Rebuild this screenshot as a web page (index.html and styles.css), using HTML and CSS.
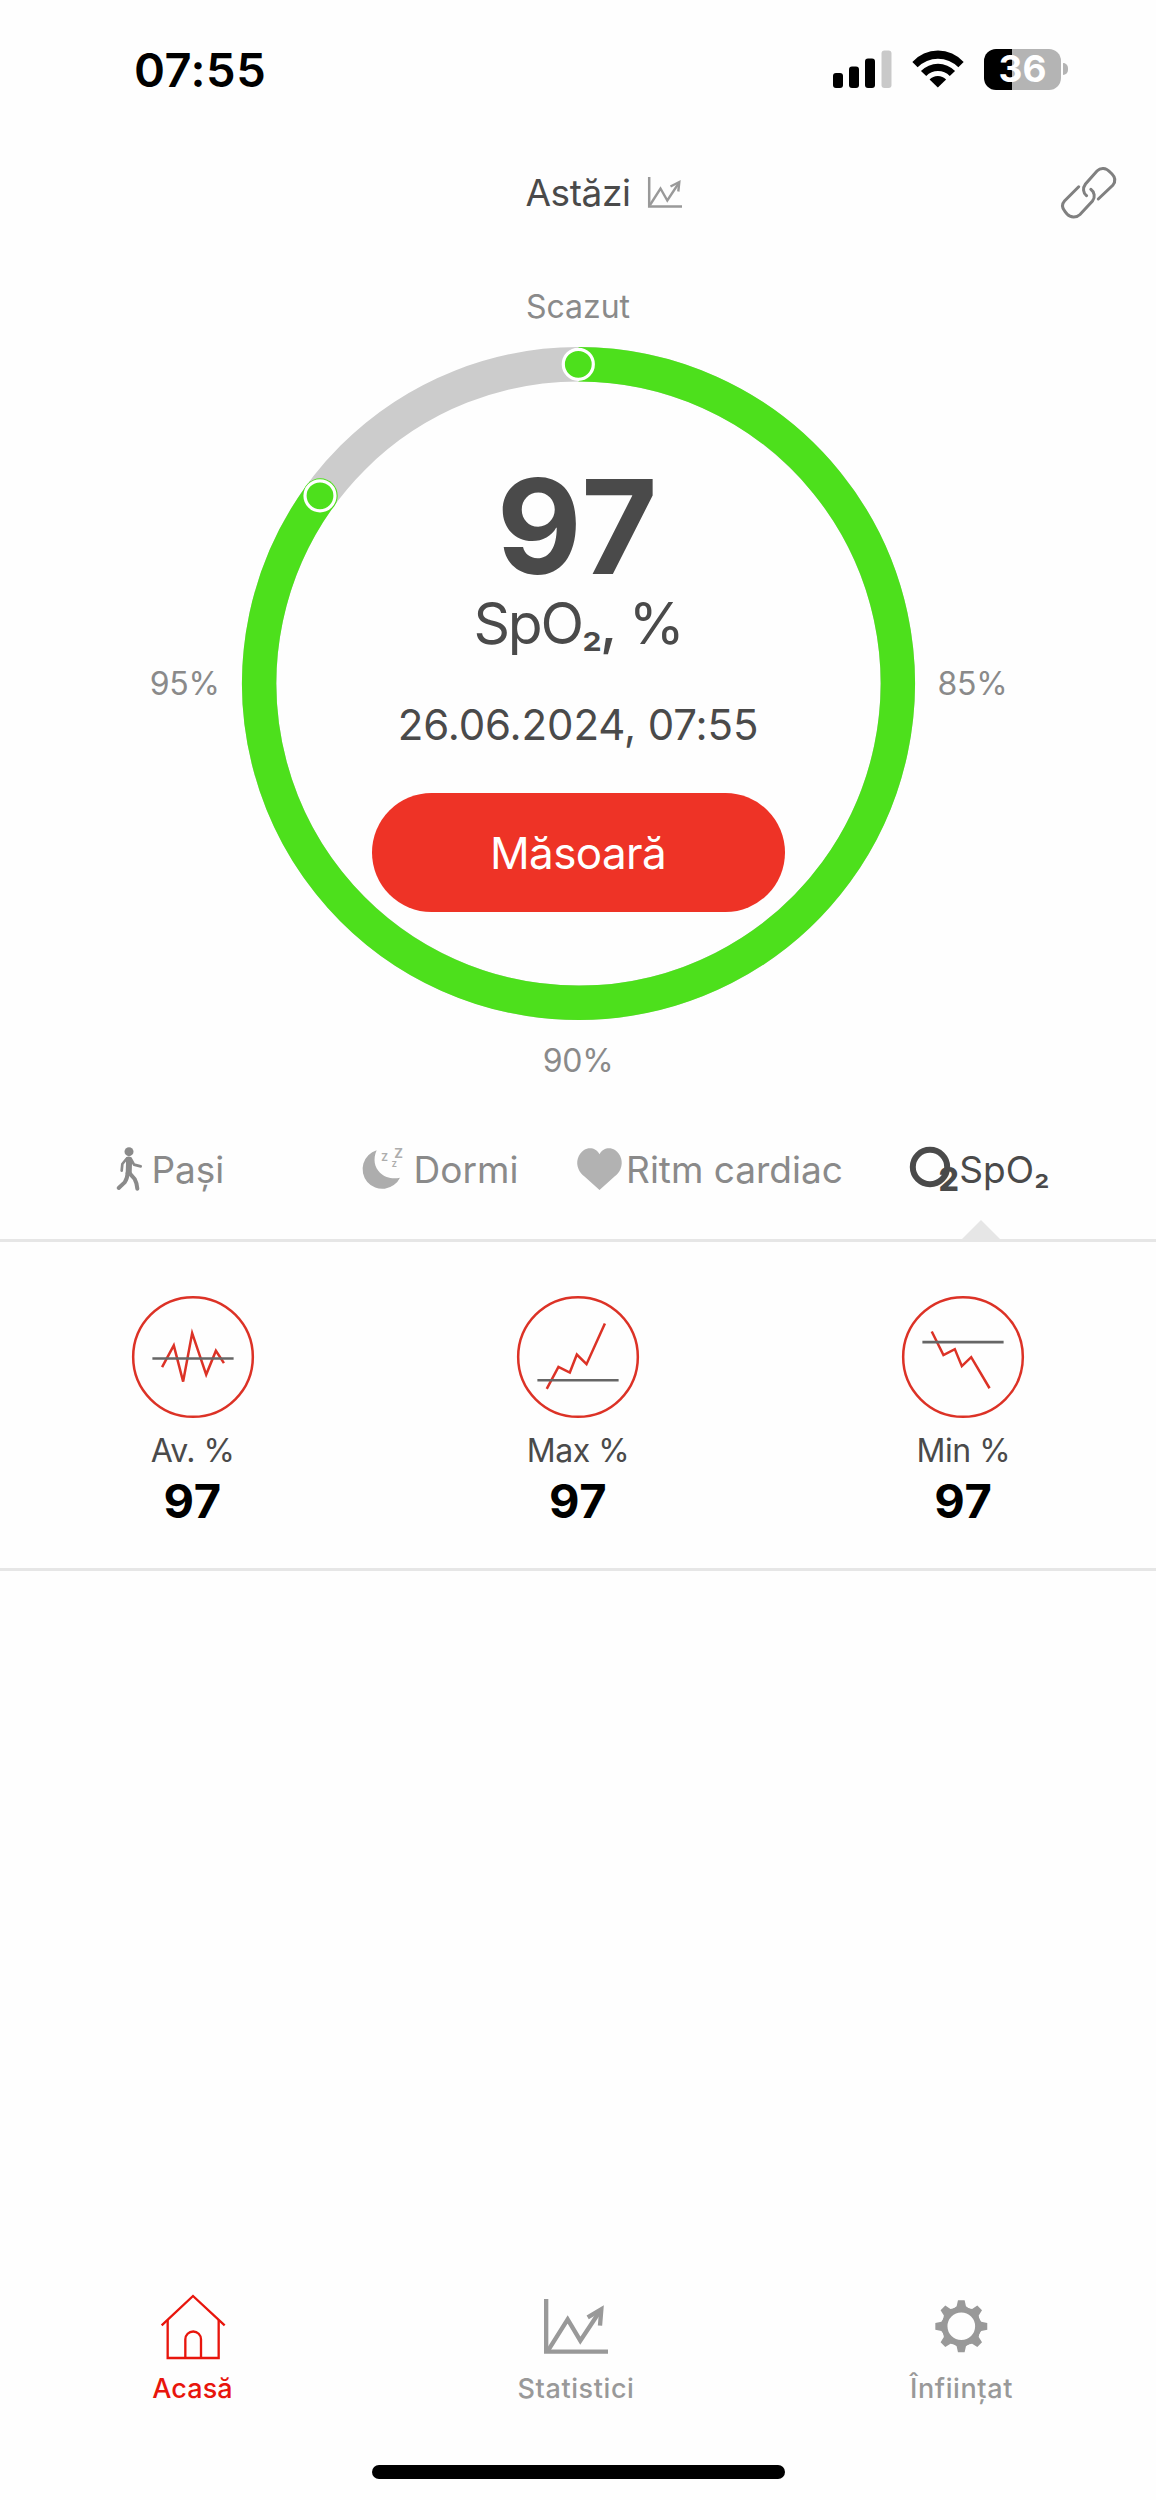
FILE: index.html
```html
<!DOCTYPE html>
<html lang="ro">
<head>
    <meta charset="UTF-8">
    <meta name="viewport" content="width=device-width, initial-scale=1.0">
    <title>SpO₂</title>
    <link rel="stylesheet" href="styles.css">
</head>
<body>
    <div class="status-bar">
        <span class="clock">07:55</span>
        <div class="status-icons">
            <svg class="signal" viewBox="0 0 59 38">
                <rect x="0" y="23" width="10" height="15" rx="3"/>
                <rect x="16" y="16.5" width="10" height="21.5" rx="3"/>
                <rect x="32" y="8.5" width="10" height="29.5" rx="3"/>
                <rect x="48.5" y="0.5" width="10" height="37.5" rx="3" fill="#c9c9c9"/>
            </svg>
            <svg class="wifi" viewBox="335 56 157 114">
                <path d="M336 92 A104 104 0 0 1 491 92 L475 108 A86 86 0 0 0 352 108 Z"/>
                <path d="M362 119 A72 72 0 0 1 465 119 L449 134 A50 50 0 0 0 378 134 Z"/>
                <path d="M388 145 A34 34 0 0 1 438 145 L413 169 Z"/>
            </svg>
            <div class="battery"><span>36</span></div>
            <div class="battery-tip"></div>
        </div>
    </div>

    <div class="header">
        <h1 class="title">Astăzi</h1>
        <div class="header-icons">
            <svg class="small-chart" viewBox="0 0 34 31">
                <path d="M1.2 0 V29.5 H34" stroke-width="2.5"/>
                <path d="M2 28 L12.5 11.5 L19.3 23.5 L30.5 6.5" stroke-width="2.4"/>
                <path d="M22.5 9.5 L31.3 5 L30.3 14.5" stroke-width="2.4"/>
            </svg>
            <svg class="link-icon" viewBox="0 0 55 52">
                <path d="M25.6 28.7 C22 26 21.5 21 24.5 17 L36 4 C39.5 .3 45 .5 49 5 L51 7 C54.5 10.5 54.5 14.5 52 18 L37.3 32"/>
                <path d="M29.8 22.3 C33.5 25 34.5 30 31.5 34 L19 47.5 C15.5 51 9.5 51 6 47 L4 44.5 C1 41 .8 37 3.5 34 L17.7 19.8"/>
            </svg>
        </div>
    </div>

    <div class="gauge">
        <div class="gauge-label gauge-top">Scazut</div>
        <div class="gauge-row">
            <div class="gauge-label gauge-left">95%</div>
            <div class="ring">
                <svg class="ring-svg" viewBox="0 0 673 673">
                    <circle cx="336.5" cy="336.5" r="319.3" fill="none" stroke="#cccccc" stroke-width="34.4"/>
                    <path d="M336.5 17.2 A319.3 319.3 0 1 1 78.2 148.8" fill="none" stroke="#4de01c" stroke-width="34.4"/>
                    <circle cx="78.2" cy="148.8" r="17.5" fill="#4de01c"/>
                    <circle cx="336.3" cy="17.3" r="15" fill="#4de01c" stroke="#fff" stroke-width="3.2"/>
                    <circle cx="78" cy="148.8" r="15" fill="#4de01c" stroke="#fff" stroke-width="3.2"/>
                </svg>
                <div class="reading">
                    <div class="reading-value">97</div>
                    <div class="reading-unit">SpO<span class="sub">₂</span><span class="comma">,</span> %</div>
                    <div class="reading-date">26.06.2024, 07:55</div>
                    <button class="measure-btn">Măsoară</button>
                </div>
            </div>
            <div class="gauge-label">85%</div>
        </div>
        <div class="gauge-label gauge-bottom">90%</div>
    </div>

    <div class="tabs">
        <div class="tab tab-steps">
            <svg class="walk-icon" viewBox="112 81 80 132">
                <circle cx="151" cy="95" r="13.5"/>
                <path class="body" d="M142 112 Q150 107 158 112 Q161 120 160 130 L159 162 H141 L142 130 Z"/>
                <path class="limb" d="M143 117 L131 132 L129 152"/>
                <path class="limb" d="M157 117 L166 134 L186 139"/>
                <path class="leg" d="M147 158 Q146 176 138 187 L120 204"/>
                <path class="leg" d="M153 160 L168 177 Q174 188 176 206"/>
            </svg>
            <span>Pași</span>
        </div>
        <div class="tab tab-sleep">
            <svg class="moon-icon" viewBox="848 81 126 125">
                <path d="M892 88 A59 59 0 1 0 962 170 C940 174 918 171 902 155 C886 140 880 115 892 88 Z"/>
                <text x="906" y="119" font-size="30">Z</text>
                <text x="937" y="138" font-size="23">Z</text>
                <text x="945" y="111" font-size="39">Z</text>
            </svg>
            <span>Dormi</span>
        </div>
        <div class="tab tab-heart">
            <svg class="heart-icon" viewBox="0 0 45 42">
                <path d="M22.5 6.2 C26 -0.3 33 -1 38 2 C44 6 46.5 14 43.5 21 C42.3 24 40 26.5 37.5 28.5 L22.5 42 L7.5 28.5 C5 26.5 2.7 24 1.5 21 C-1.5 14 1 6 7 2 C12 -1 19 -0.3 22.5 6.2 Z"/>
            </svg>
            <span>Ritm cardiac</span>
        </div>
        <div class="tab tab-spo2 active">
            <svg class="o2-icon" viewBox="0 0 49 44">
                <circle cx="20" cy="20" r="17.2"/>
                <text x="28.5" y="43.5">2</text>
            </svg>
            <span>SpO<span class="sub">₂</span></span>
            <i class="arrow"></i>
        </div>
    </div>

    <div class="stats">
        <div class="stat">
            <svg class="stat-icon" viewBox="97 47 365 365">
                <circle cx="279.5" cy="229.5" r="179"/>
                <polyline points="187,260 222,195 250,303 277,158 319,282 348,211 372,248"/>
                <line x1="158" y1="234" x2="401" y2="234"/>
            </svg>
            <div class="stat-label">Av. %</div>
            <div class="stat-value">97</div>
        </div>
        <div class="stat">
            <svg class="stat-icon" viewBox="97 47 365 365">
                <circle cx="279.5" cy="229.5" r="179"/>
                <polyline points="186,325 221,259 255,276 276,222 305,251 360,129"/>
                <line x1="158" y1="299" x2="401" y2="299"/>
            </svg>
            <div class="stat-label">Max %</div>
            <div class="stat-value">97</div>
        </div>
        <div class="stat">
            <svg class="stat-icon" viewBox="97 47 365 365">
                <circle cx="279.5" cy="229.5" r="179"/>
                <polyline points="186,153 221,224 255,206 276,257 304,230 359,323"/>
                <line x1="158" y1="185" x2="401" y2="185"/>
            </svg>
            <div class="stat-label">Min %</div>
            <div class="stat-value">97</div>
        </div>
    </div>

    <div class="bottom-nav">
        <div class="nav-item active">
            <div class="nav-icon">
                <svg width="64" height="65" viewBox="121 72 192 195" fill="none" stroke="currentColor" stroke-width="7">
                    <path d="M123 166 L217 78 L312 166"/>
                    <path d="M141 150 V264 H294 V150"/>
                    <path d="M194 264 V208 A23.5 23.5 0 0 1 241 208 V264"/>
                </svg>
            </div>
            <span>Acasă</span>
        </div>
        <div class="nav-item">
            <div class="nav-icon">
                <svg width="64" height="55" viewBox="1272 85 192 165" fill="none" stroke="currentColor" stroke-width="13">
                    <path d="M1278.5 85 V243 H1464"/>
                    <path d="M1284 240 L1343 146 L1381 210 L1440 121"/>
                    <path d="M1403 140 L1444 116 L1440 165"/>
                </svg>
            </div>
            <span>Statistici</span>
        </div>
        <div class="nav-item">
            <div class="nav-icon">
                <svg width="52.6" height="52.6" viewBox="-79 -79 158 158" fill="currentColor">
                    <circle r="50" fill="none" stroke="currentColor" stroke-width="17"/>
                    <path id="tooth" d="M-10 -78 H10 L14 -60 L24 -53 L20 -45 H-20 L-24 -53 L-14 -60 Z"/>
                    <use href="#tooth" transform="rotate(45)"/>
                    <use href="#tooth" transform="rotate(90)"/>
                    <use href="#tooth" transform="rotate(135)"/>
                    <use href="#tooth" transform="rotate(180)"/>
                    <use href="#tooth" transform="rotate(225)"/>
                    <use href="#tooth" transform="rotate(270)"/>
                    <use href="#tooth" transform="rotate(315)"/>
                </svg>
            </div>
            <span>Înființat</span>
        </div>
    </div>
    <div class="home-indicator"></div>
</body>
</html>
```

FILE: styles.css
```css
* {
    box-sizing: border-box;
    margin: 0;
    padding: 0;
}
body {
    width: 1156px;
    height: 2500px;
    display: flex;
    flex-direction: column;
    background: #fefefe;
    color: #4a4a4a;
    font-family: Inter, "Liberation Sans", sans-serif;
    overflow: hidden;
}
svg {
    display: block;
    flex: none;
    overflow: visible;
}

/* Status bar */
.status-bar {
    height: 138px;
    padding: 0 88px 0 134px;
    display: flex;
    align-items: center;
    justify-content: space-between;
    color: #000;
}
.clock {
    font-size: 47px;
    font-weight: 600;
    letter-spacing: 0.5px;
}
.status-icons {
    display: flex;
    align-items: center;
}
.signal {
    width: 59px;
    height: 38px;
    margin-right: 20px;
}
.wifi {
    width: 52px;
    height: 38px;
    margin-right: 20px;
}
.battery {
    width: 77px;
    height: 41px;
    border-radius: 12px;
    background: linear-gradient(to right, #000 28px, #b4b4b4 28px);
    color: #fff;
    font-size: 37px;
    font-weight: 700;
    line-height: 40px;
    text-align: center;
}
.battery-tip {
    width: 5px;
    height: 12px;
    margin-left: 2px;
    border-radius: 0 6px 6px 0;
    background: #b4b4b4;
}

/* Header */
.header {
    height: 109px;
    display: grid;
    grid-template-columns: 1fr auto 1fr;
    align-items: center;
}
.title {
    grid-column: 2;
    font-size: 37px;
    font-weight: 400;
    letter-spacing: -0.4px;
}
.header-icons {
    display: flex;
    align-items: center;
    justify-content: space-between;
    padding: 0 40px 0 17px;
}
.small-chart {
    width: 34px;
    height: 31px;
    fill: none;
    stroke: #999;
}
.link-icon {
    width: 55px;
    height: 52px;
    fill: none;
    stroke: #808080;
    stroke-width: 3;
    stroke-linecap: round;
}

/* Gauge */
.gauge {
    padding-top: 40px;
}
.gauge-label {
    color: #8a8a8a;
    font-size: 32px;
    line-height: 40px;
    text-align: center;
    letter-spacing: -0.3px;
}
.gauge-top {
    margin-bottom: 20px;
    letter-spacing: 0;
}
.gauge-bottom {
    margin-top: 21px;
}
.gauge-row {
    display: flex;
    align-items: center;
    justify-content: center;
    gap: 23px;
}
.gauge-left {
    margin: 0 -1px 0 1px;
}
.ring {
    width: 673px;
    height: 673px;
    display: grid;
}
.ring-svg, .reading {
    grid-area: 1 / 1;
}
.reading {
    display: flex;
    flex-direction: column;
    align-items: center;
    padding-top: 120px;
}
.reading-value {
    font-size: 131px;
    font-weight: 700;
    line-height: 120px;
    letter-spacing: 2px;
}
.reading-unit {
    height: 72px;
    font-size: 57px;
    line-height: 74px;
    letter-spacing: -2.3px;
}
.reading-unit .sub {
    font-size: 46px;
    font-weight: 500;
}
.reading-unit .comma {
    font-weight: 500;
}
.reading-date {
    margin-top: 36px;
    font-size: 42px;
    line-height: 60px;
    letter-spacing: -0.1px;
}
.measure-btn {
    width: 413px;
    height: 119px;
    margin-top: 38px;
    border: none;
    border-radius: 60px;
    background: #ee3326;
    color: #fff;
    font-family: inherit;
    font-size: 44px;
    letter-spacing: -0.6px;
}

/* Tabs */
.tabs {
    height: 123px;
    margin-top: 38px;
    padding: 0 35px;
    display: grid;
    grid-template-columns: repeat(4, 270px);
    border-bottom: 3px solid #e6e6e6;
}
.tab {
    position: relative;
    height: 100px;
    display: flex;
    align-items: center;
    justify-content: center;
    color: #8a8a8a;
    font-size: 37px;
    white-space: nowrap;
}
.tab.active {
    color: #4a4a4a;
}
.tab .sub {
    font-size: 35px;
    font-weight: 500;
}
.walk-icon {
    width: 26.7px;
    height: 44px;
    margin-right: 9px;
    fill: #8a8a8a;
}
.walk-icon .limb, .walk-icon .leg {
    fill: none;
    stroke: #8a8a8a;
    stroke-width: 8;
    stroke-linecap: round;
    stroke-linejoin: round;
}
.walk-icon .leg {
    stroke-width: 12;
}
.moon-icon {
    width: 42px;
    height: 41.7px;
    margin-right: 10px;
    fill: #adadad;
    font-weight: 700;
}
.heart-icon {
    width: 45px;
    height: 42px;
    margin-right: 4px;
    fill: #b2b2b2;
}
.o2-icon {
    width: 49px;
    height: 44px;
    fill: #4a4a4a;
    font-size: 32px;
    font-weight: 800;
}
.o2-icon circle {
    fill: none;
    stroke: #4a4a4a;
    stroke-width: 6;
}
.arrow {
    position: absolute;
    left: 50%;
    bottom: -20px;
    margin-left: -18px;
    border: 19px solid transparent;
    border-top: none;
    border-bottom-color: #e6e6e6;
}

/* Stats */
.stats {
    height: 329px;
    padding-top: 54px;
    display: grid;
    grid-template-columns: repeat(3, 1fr);
    border-bottom: 3px solid #e6e6e6;
}
.stat {
    display: flex;
    flex-direction: column;
    align-items: center;
}
.stat-icon {
    width: 122px;
    height: 122px;
    fill: none;
    stroke: #dc3226;
    stroke-width: 7.5;
}
.stat-icon line {
    stroke: #666;
}
.stat-label {
    margin-top: 13px;
    font-size: 32px;
    line-height: 40px;
    letter-spacing: -0.5px;
}
.stat-value {
    margin-top: 5px;
    color: #000;
    font-size: 47px;
    font-weight: 700;
    line-height: 50px;
    letter-spacing: 0.6px;
}

/* Bottom navigation */
.bottom-nav {
    margin-top: auto;
    height: 170px;
    display: grid;
    grid-template-columns: 385px 382px 389px;
}
.nav-item {
    display: flex;
    flex-direction: column;
    align-items: center;
    color: #999;
    font-size: 27px;
    font-weight: 500;
    line-height: 30px;
    letter-spacing: 0.6px;
}
.nav-item.active {
    color: #e8150c;
    letter-spacing: 0.1px;
}
.nav-icon {
    height: 63px;
    margin-bottom: 16px;
    display: flex;
    align-items: center;
}
.home-indicator {
    width: 413px;
    height: 14px;
    margin: 0 auto 21px;
    border-radius: 7px;
    background: #000;
}
```
